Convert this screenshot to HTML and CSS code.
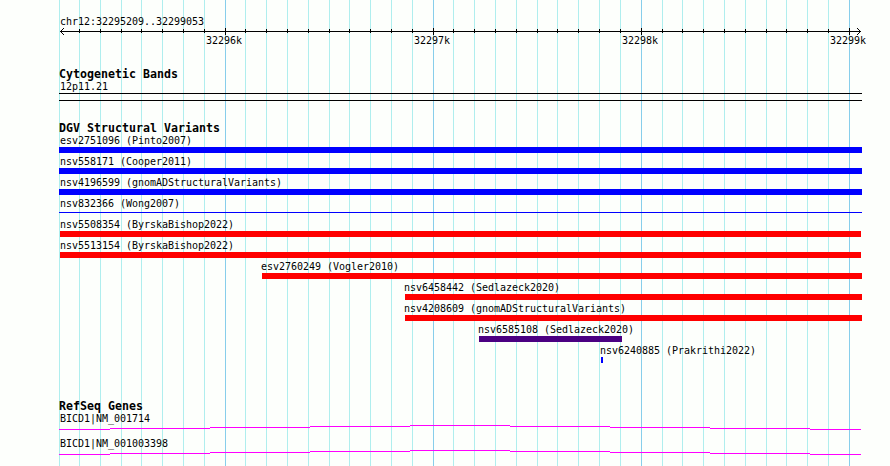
FILE: index.html
```
<!DOCTYPE html>
<html lang="en">
<head>
    <meta charset="UTF-8">
    <title>chr12:32295209..32299053</title>
    <link rel="stylesheet" href="styles.css">
</head>
<body>
    <div class="browser">
        <svg class="grid" id="grid" width="890" height="466" shape-rendering="crispEdges"></svg>
        <div class="tracks">
            <div class="region">chr12:32295209..32299053</div>
            <svg class="ruler" id="ruler" width="804" height="9" shape-rendering="crispEdges">
                <path d="M1 4.5H802" stroke="#000"/>
                <path d="M1 4h1v1h-1zM2 3h1v3h-1zM3 2h1v1h-1zM3 6h1v1h-1zM4 1h1v1h-1zM4 7h1v1h-1zM800 3h1v3h-1zM799 2h1v1h-1zM799 6h1v1h-1zM798 1h1v1h-1zM798 7h1v1h-1z"/>
            </svg>
            <div class="scale">
                <span>32296k</span><span>32297k</span><span>32298k</span><span>32299k</span>
            </div>

            <h2 class="title cyto">Cytogenetic Bands</h2>
            <div class="label">12p11.21</div>
            <div class="band"></div>

            <h2 class="title dgv">DGV Structural Variants</h2>
            <div class="variant gain"><span>esv2751096 (Pinto2007)</span><i></i></div>
            <div class="variant gain"><span>nsv558171 (Cooper2011)</span><i></i></div>
            <div class="variant gain"><span>nsv4196599 (gnomADStructuralVariants)</span><i></i></div>
            <div class="variant gain thin"><span>nsv832366 (Wong2007)</span><i></i></div>
            <div class="variant loss inset"><span>nsv5508354 (ByrskaBishop2022)</span><i></i></div>
            <div class="variant loss inset"><span>nsv5513154 (ByrskaBishop2022)</span><i></i></div>
            <div class="variant loss vogler"><span>esv2760249 (Vogler2010)</span><i></i></div>
            <div class="variant loss sedlazeck"><span>nsv6458442 (Sedlazeck2020)</span><i></i></div>
            <div class="variant loss sedlazeck"><span>nsv4208609 (gnomADStructuralVariants)</span><i></i></div>
            <div class="variant complex"><span>nsv6585108 (Sedlazeck2020)</span><i></i></div>
            <div class="variant gain prakrithi"><span>nsv6240885 (Prakrithi2022)</span><i></i></div>

            <h2 class="title refseq">RefSeq Genes</h2>
            <div class="gene">
                <span>BICD1|NM_001714</span>
                <svg width="803" height="5" shape-rendering="crispEdges"><path d="M0 4.5H51M51 3.5H151M151 2.5H251M251 1.5H351M351 .5H451M451 1.5H551M551 2.5H651M651 3.5H751M751 4.5H802" stroke="#f0f"/></svg>
            </div>
            <div class="gene">
                <span>BICD1|NM_001003398</span>
                <svg width="803" height="5" shape-rendering="crispEdges"><path d="M0 4.5H51M51 3.5H151M151 2.5H251M251 1.5H351M351 .5H451M451 1.5H551M551 2.5H651M651 3.5H751M751 4.5H802" stroke="#f0f"/></svg>
            </div>
        </div>
    </div>
    <script>
        const lines = [59, 79, 100, 121, 141, 162, 183, 204, 225, 245, 266, 287, 308, 329,
            349, 370, 391, 412, 433, 453, 474, 495, 516, 537, 557, 578, 599, 620, 641,
            662, 682, 703, 724, 745, 766, 786, 807, 828, 849];
        let grid = '';
        let ticks = '';

        lines.forEach((x, i) => {
            const major = i % 10 === 8;
            grid += `<rect x="${x}" y="0" width="1" height="466" fill="${major ? '#87ceeb' : '#afeeee'}"/>`;
            if (i > 0) {
                ticks += `<rect x="${x - 59}" y="${major ? 1 : 2}" width="1" height="${major ? 7 : 4}"/>`;
            }
        });
        document.getElementById('grid').innerHTML = grid;
        document.getElementById('ruler').innerHTML += ticks;
    </script>
</body>
</html>
```
FILE: styles.css
```
body {
    margin: 0;
    background-color: #fdfffc;
    overflow: hidden;
}
.browser {
    position: relative;
    width: 890px;
    height: 466px;
    overflow: hidden;
    font-family: "DejaVu Sans Mono", "Liberation Mono", monospace;
    font-size: 10px;
    line-height: 12px;
    letter-spacing: -0.02px;
    color: #000;
    white-space: nowrap;
}
.grid {
    position: absolute;
    top: 0;
    left: 0;
}
.tracks {
    position: relative;
    display: flex;
    flex-direction: column;
    padding: 15px 0 0 59px;
}
.tracks svg {
    display: block;
}
.region {
    height: 12px;
    line-height: 14px;
    padding-left: 1px;
}
.scale {
    display: flex;
    gap: 172px;
    height: 12px;
    margin-top: -1px;
    padding-left: 147px;
}
.scale span {
    width: 36px;
}
.title {
    height: 12px;
    margin: 0;
    font-size: 11.6px;
    line-height: 12px;
    font-weight: bold;
    letter-spacing: 0.02px;
}
.cyto {
    margin-top: 21px;
}
.label {
    height: 12px;
    line-height: 14px;
    padding-left: 1px;
}
.band {
    box-sizing: border-box;
    width: 803px;
    height: 8px;
    margin-top: 1px;
    border-top: 1px solid #000;
    border-bottom: 1px solid #000;
}
.dgv {
    margin-top: 21px;
}
.variant {
    display: flex;
    flex-direction: column;
    width: 803px;
    height: 21px;
}
.variant span {
    height: 13px;
    line-height: 14px;
    padding-left: 1px;
}
.variant i {
    height: 6px;
}
.gain i {
    background-color: #00f;
}
.loss i {
    background-color: #f00;
}
.complex i {
    background-color: #4b0082;
}
.thin i {
    height: 1px;
    margin-top: 2px;
}
.inset i {
    width: 801px;
    margin-left: 1px;
}
.vogler {
    width: 600px;
    margin-left: 203px;
}
.vogler span,
.sedlazeck span,
.complex span,
.prakrithi span {
    margin-left: -2px;
}
.sedlazeck {
    width: 457px;
    margin-left: 346px;
}
.complex {
    width: 143px;
    margin-left: 420px;
}
.prakrithi {
    width: 2px;
    margin-left: 542px;
}
.refseq {
    margin-top: 35px;
}
.gene {
    height: 25px;
}
.gene span {
    display: block;
    height: 13px;
    line-height: 14px;
    padding-left: 1px;
}
```
